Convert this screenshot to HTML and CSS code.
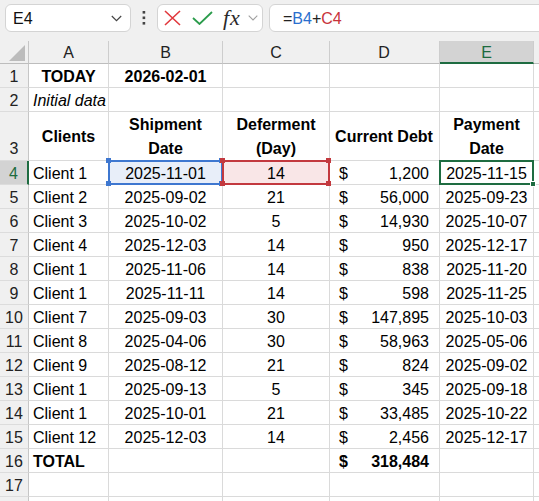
FILE: index.html
```html
<!DOCTYPE html>
<html lang="en">
<head>
  <meta charset="UTF-8">
  <meta name="viewport" content="width=device-width, initial-scale=1">
  <title>Payments sheet</title>
  <link rel="stylesheet" href="styles.css">
</head>
<body>
  <div class="toolbar">
    <div class="namebox">
      <span>E4</span>
      <svg width="11" height="7" viewBox="0 0 11 7"><polyline points="0.8,1 5.5,5.6 10.2,1" fill="none" stroke="#444" stroke-width="1.2"/></svg>
    </div>
    <div class="grip">
      <svg width="4" height="14" viewBox="0 0 4 14"><rect x="0.6" y="0" width="2.6" height="2.6" fill="#444"/><rect x="0.6" y="5.5" width="2.6" height="2.6" fill="#444"/><rect x="0.6" y="11" width="2.6" height="2.6" fill="#444"/></svg>
    </div>
    <div class="fnbox">
      <svg class="ic-x" width="17" height="16" viewBox="0 0 17 16"><path d="M1 1 L16 15 M16 1 L1 15" stroke="#e1383d" stroke-width="1.6" fill="none"/></svg>
      <svg class="ic-ok" width="21" height="14" viewBox="0 0 21 14"><polyline points="1,7 7.5,13 20,1" fill="none" stroke="#2b9c4c" stroke-width="1.8"/></svg>
      <span class="fx">fx</span>
      <svg class="ic-dd" width="10" height="6" viewBox="0 0 10 6"><polyline points="0.7,0.7 5,5 9.3,0.7" fill="none" stroke="#a0a0a0" stroke-width="1.1"/></svg>
    </div>
    <div class="formula">=<span class="ref-blue">B4</span>+<span class="ref-red">C4</span></div>
  </div>

  <div class="sheet">
    <div class="row head">
      <div class="rh corner"></div>
      <div class="c ca">A</div>
      <div class="c cb">B</div>
      <div class="c cc">C</div>
      <div class="c cd">D</div>
      <div class="c ce on">E</div>
      <div class="c cf"></div>
    </div>

    <div class="row">
      <div class="rh">1</div>
      <div class="c ca mid bold">TODAY</div>
      <div class="c cb bold">2026-02-01</div>
      <div class="c cc"></div>
      <div class="c cd"></div>
      <div class="c ce"></div>
      <div class="c cf"></div>
    </div>
    <div class="row">
      <div class="rh">2</div>
      <div class="c ca italic">Initial data</div>
      <div class="c cb"></div>
      <div class="c cc"></div>
      <div class="c cd"></div>
      <div class="c ce"></div>
      <div class="c cf"></div>
    </div>
    <div class="row tall">
      <div class="rh">3</div>
      <div class="c ca mid bold">Clients</div>
      <div class="c cb wrap bold">Shipment<br>Date</div>
      <div class="c cc wrap bold">Deferment<br>(Day)</div>
      <div class="c cd mid bold">Current Debt</div>
      <div class="c ce wrap bold">Payment<br>Date</div>
      <div class="c cf"></div>
    </div>
    <div class="row">
      <div class="rh on">4</div>
      <div class="c ca">Client 1</div>
      <div class="c cb sel ref-b">2025-11-01<i class="k tl"></i><i class="k tr"></i><i class="k bl"></i><i class="k br"></i></div>
      <div class="c cc sel ref-c">14<i class="k tl"></i><i class="k tr"></i><i class="k bl"></i><i class="k br"></i></div>
      <div class="c cd"><span>$</span><span>1,200</span></div>
      <div class="c ce sel active">2025-11-15<i class="fh"></i></div>
      <div class="c cf"></div>
    </div>
    <div class="row">
      <div class="rh">5</div>
      <div class="c ca">Client 2</div>
      <div class="c cb">2025-09-02</div>
      <div class="c cc">21</div>
      <div class="c cd"><span>$</span><span>56,000</span></div>
      <div class="c ce">2025-09-23</div>
      <div class="c cf"></div>
    </div>
    <div class="row">
      <div class="rh">6</div>
      <div class="c ca">Client 3</div>
      <div class="c cb">2025-10-02</div>
      <div class="c cc">5</div>
      <div class="c cd"><span>$</span><span>14,930</span></div>
      <div class="c ce">2025-10-07</div>
      <div class="c cf"></div>
    </div>
    <div class="row">
      <div class="rh">7</div>
      <div class="c ca">Client 4</div>
      <div class="c cb">2025-12-03</div>
      <div class="c cc">14</div>
      <div class="c cd"><span>$</span><span>950</span></div>
      <div class="c ce">2025-12-17</div>
      <div class="c cf"></div>
    </div>
    <div class="row">
      <div class="rh">8</div>
      <div class="c ca">Client 1</div>
      <div class="c cb">2025-11-06</div>
      <div class="c cc">14</div>
      <div class="c cd"><span>$</span><span>838</span></div>
      <div class="c ce">2025-11-20</div>
      <div class="c cf"></div>
    </div>
    <div class="row">
      <div class="rh">9</div>
      <div class="c ca">Client 1</div>
      <div class="c cb">2025-11-11</div>
      <div class="c cc">14</div>
      <div class="c cd"><span>$</span><span>598</span></div>
      <div class="c ce">2025-11-25</div>
      <div class="c cf"></div>
    </div>
    <div class="row">
      <div class="rh">10</div>
      <div class="c ca">Client 7</div>
      <div class="c cb">2025-09-03</div>
      <div class="c cc">30</div>
      <div class="c cd"><span>$</span><span>147,895</span></div>
      <div class="c ce">2025-10-03</div>
      <div class="c cf"></div>
    </div>
    <div class="row">
      <div class="rh">11</div>
      <div class="c ca">Client 8</div>
      <div class="c cb">2025-04-06</div>
      <div class="c cc">30</div>
      <div class="c cd"><span>$</span><span>58,963</span></div>
      <div class="c ce">2025-05-06</div>
      <div class="c cf"></div>
    </div>
    <div class="row">
      <div class="rh">12</div>
      <div class="c ca">Client 9</div>
      <div class="c cb">2025-08-12</div>
      <div class="c cc">21</div>
      <div class="c cd"><span>$</span><span>824</span></div>
      <div class="c ce">2025-09-02</div>
      <div class="c cf"></div>
    </div>
    <div class="row">
      <div class="rh">13</div>
      <div class="c ca">Client 1</div>
      <div class="c cb">2025-09-13</div>
      <div class="c cc">5</div>
      <div class="c cd"><span>$</span><span>345</span></div>
      <div class="c ce">2025-09-18</div>
      <div class="c cf"></div>
    </div>
    <div class="row">
      <div class="rh">14</div>
      <div class="c ca">Client 1</div>
      <div class="c cb">2025-10-01</div>
      <div class="c cc">21</div>
      <div class="c cd"><span>$</span><span>33,485</span></div>
      <div class="c ce">2025-10-22</div>
      <div class="c cf"></div>
    </div>
    <div class="row">
      <div class="rh">15</div>
      <div class="c ca">Client 12</div>
      <div class="c cb">2025-12-03</div>
      <div class="c cc">14</div>
      <div class="c cd"><span>$</span><span>2,456</span></div>
      <div class="c ce">2025-12-17</div>
      <div class="c cf"></div>
    </div>
    <div class="row">
      <div class="rh">16</div>
      <div class="c ca bold">TOTAL</div>
      <div class="c cb"></div>
      <div class="c cc"></div>
      <div class="c cd bold"><span>$</span><span>318,484</span></div>
      <div class="c ce"></div>
      <div class="c cf"></div>
    </div>
    <div class="row">
      <div class="rh">17</div>
      <div class="c ca"></div>
      <div class="c cb"></div>
      <div class="c cc"></div>
      <div class="c cd"></div>
      <div class="c ce"></div>
      <div class="c cf"></div>
    </div>
    <div class="row">
      <div class="rh"></div>
      <div class="c ca"></div>
      <div class="c cb"></div>
      <div class="c cc"></div>
      <div class="c cd"></div>
      <div class="c ce"></div>
      <div class="c cf"></div>
    </div>
  </div>
</body>
</html>
```

FILE: styles.css
```css
* { box-sizing: border-box; margin: 0; padding: 0; }
body { font-family: "Liberation Sans", Arial, sans-serif; font-size: 16px; color: #000; background: #fff; overflow: hidden; }

/* formula bar */
.toolbar { display: flex; align-items: flex-start; height: 41px; padding-top: 4px; background: #f0f0f0; overflow: hidden; }
.namebox { display: flex; align-items: center; justify-content: space-between; flex: none; width: 126px; height: 28px; margin-left: 5px; padding: 1px 8px 0 7px; background: #fff; border: 1px solid #d4d4d4; border-radius: 6px; color: #111; }
.grip { display: flex; justify-content: center; align-items: center; flex: none; width: 26px; height: 28px; }
.fnbox { display: flex; align-items: center; flex: none; width: 106px; height: 28px; padding-left: 6px; background: #fff; border: 1px solid #d4d4d4; border-radius: 6px; }
.fnbox .ic-ok { margin-left: 11px; }
.fnbox .fx { margin-left: 10px; font-family: "Liberation Serif", "DejaVu Serif", serif; font-style: italic; font-size: 22px; line-height: 26px; color: #2a2a2a; letter-spacing: 1px; }
.fnbox .ic-dd { margin-left: 7px; }
.formula { flex: 1; height: 28px; margin-left: 6px; margin-right: -10px; padding: 1px 0 0 13px; line-height: 26px; background: #fff; border: 1px solid #d4d4d4; border-radius: 6px; color: #222; }
.ref-blue { color: #2a6fce; }
.ref-red { color: #c8333b; }

/* grid */
.row { display: flex; height: 24px; }
.row.tall { height: 49px; }
.row.head { height: 23px; background: #f0f0f0; }

.rh { display: flex; align-items: center; justify-content: center; flex: none; width: 29px; padding-top: 2px; background: #f0f0f0; border-right: 1px solid #c6c6c6; border-bottom: 1px solid #dcdcdc; color: #222; }
.row.tall .rh { align-items: flex-end; line-height: 23px; padding-top: 0; }
.rh.on { background: #d3d3d3; color: #1d6b3e; border-right: 2px solid #1e6c41; }
.corner { position: relative; border-bottom-color: #bdbdbd; }
.corner::after { content: ""; position: absolute; right: 3px; bottom: 2px; width: 0; height: 0; border-left: 16px solid transparent; border-bottom: 16px solid #bcbcbc; }

.c { display: flex; align-items: center; flex: none; padding: 2px 4px 0; white-space: nowrap; border-right: 1px solid #dadada; border-bottom: 1px solid #dadada; }
.ca { width: 80px; }
.cb { width: 114px; justify-content: center; }
.cc { width: 107px; justify-content: center; }
.cd { width: 110px; justify-content: space-between; padding: 2px 10px 0 9px; }
.ce { width: 94px; justify-content: center; }
.cf { flex: 1; border-right: none; }
.mid { justify-content: center; }
.bold { font-weight: bold; }
.italic { font-style: italic; }
.wrap { text-align: center; line-height: 24px; white-space: normal; }

.row.head .c { justify-content: center; background: #f0f0f0; color: #222; border-right-color: #cdcdcd; border-bottom-color: #bdbdbd; }
.row.head .c.on { background: #d3d3d3; color: #1d6b3e; border-bottom: 2px solid #1e6c41; }

/* selection and formula references */
.sel { position: relative; }
.sel::before { content: ""; position: absolute; left: -1px; top: -1px; right: -1px; bottom: -1px; border: 2px solid; }
.ref-b { background: #e8eef9; }
.ref-b::before { border-color: #3e77d0; }
.ref-c { background: #f9e6e7; }
.ref-c::before { border-color: #c3393f; }
.active::before { border-color: #1e6c41; }
.k { position: absolute; width: 5px; height: 5px; }
.ref-b .k { background: #3e77d0; }
.ref-c .k { background: #c3393f; }
.tl { left: -3px; top: -3px; }
.tr { right: -2px; top: -3px; }
.bl { left: -3px; bottom: -2px; }
.br { right: -2px; bottom: -2px; }
.fh { position: absolute; right: -3px; bottom: -3px; width: 6px; height: 6px; background: #1e6c41; border: 1px solid #fff; }
```
